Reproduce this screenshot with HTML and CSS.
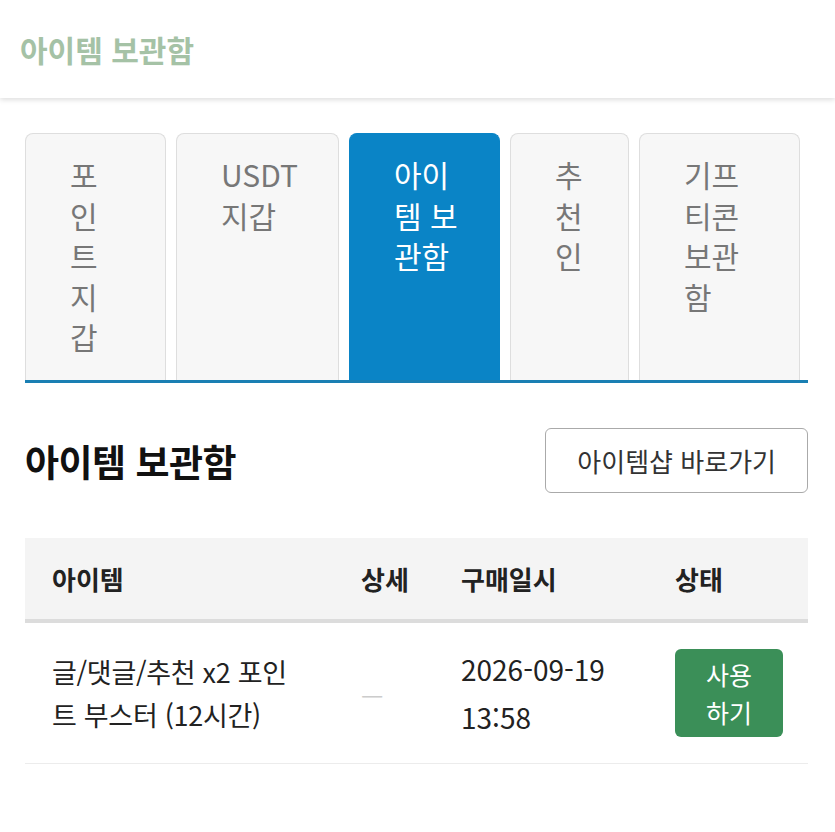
FILE: index.html
```html
<!DOCTYPE html>
<html lang="ko">
<head>
    <meta charset="UTF-8">
    <meta name="viewport" content="width=device-width, initial-scale=1.0">
    <title>아이템 보관함</title>
    <link rel="stylesheet" href="styles.css">
</head>
<body>
    <!-- 상단 헤더 -->
    <header class="top-bar">
        <h1 class="top-title">아이템 보관함</h1>
    </header>

    <main class="page">
        <!-- 마이페이지 탭 -->
        <ul class="tabs">
            <li class="tab tab-point">포인트 지갑</li>
            <li class="tab tab-usdt">USDT 지갑</li>
            <li class="tab tab-item active">아이템 보관함</li>
            <li class="tab tab-ref">추천인</li>
            <li class="tab tab-gift">기프티콘 보관함</li>
        </ul>

        <div class="section-head">
            <h2>아이템 보관함</h2>
            <a class="shop-btn" href="#">아이템샵 바로가기</a>
        </div>

        <table class="item-table">
            <colgroup>
                <col class="col-name">
                <col class="col-detail">
                <col class="col-date">
                <col class="col-state">
            </colgroup>
            <thead>
                <tr>
                    <th>아이템</th>
                    <th>상세</th>
                    <th>구매일시</th>
                    <th>상태</th>
                </tr>
            </thead>
            <tbody>
                <tr>
                    <td class="name">글/댓글/추천 x2 포인트 부스터 (12시간)</td>
                    <td class="detail">—</td>
                    <td class="date">2026-09-19 13:58</td>
                    <td class="state"><button class="use-btn">사용하기</button></td>
                </tr>
            </tbody>
        </table>
    </main>
</body>
</html>
```

FILE: styles.css
```css
body {
    margin: 0;
    font-family: "Noto Sans CJK KR", "Noto Sans", sans-serif;
    background: #fff;
    color: #222;
}
.top-bar {
    height: 98px;
    background: #fff;
    box-shadow: 0 2px 5px rgba(0, 0, 0, 0.13);
    display: flex;
    align-items: center;
    padding: 0 20px;
}
.top-title {
    margin: 0;
    font-size: 30px;
    font-weight: 700;
    color: #a5c2a6; /* 연한 녹색 */
}
.page {
    padding: 35px 27px 40px 25px;
}
/* 탭 */
.tabs {
    list-style: none;
    margin: 0;
    padding: 0;
    display: flex;
    gap: 10px;
    border-bottom: 3px solid #1a7fb3;
}
.tab {
    box-sizing: border-box;
    height: 247px;
    padding: 20px 43px 0 44px;
    background: #f7f7f7;
    border: 1px solid #dedede;
    border-bottom: none;
    border-radius: 8px 8px 0 0;
    font-size: 30px;
    line-height: 40.5px;
    color: #777;
    flex: none;
}
.tab-point { width: 141px; }
.tab-usdt { width: 163px; }
.tab-item { width: 151px; padding-right: 34px; }
.tab-ref { width: 119px; }
.tab-gift { width: 161px; }
.tab.active {
    background: #0a84c6;
    border-color: #0a84c6;
    color: #fff;
}
/* 섹션 제목 */
.section-head {
    display: flex;
    justify-content: space-between;
    align-items: center;
    margin: 45px 0 45px;
}
.section-head h2 {
    margin: 0;
    font-size: 37px;
    font-weight: 700;
    color: #111;
    letter-spacing: -0.5px;
}
.shop-btn {
    box-sizing: border-box;
    height: 65px;
    display: flex;
    align-items: center;
    padding: 0 31px;
    border: 1px solid #aaa;
    border-radius: 6px;
    font-size: 26px;
    color: #333;
    text-decoration: none;
}
/* 테이블 */
.item-table {
    width: 100%;
    border-collapse: collapse;
    table-layout: fixed;
}
.col-name { width: 309px; }
.col-detail { width: 100px; }
.col-date { width: 214px; }
.col-state { width: 160px; }
.item-table th {
    height: 81px;
    padding: 0 0 0 27px;
    background: #f4f4f4;
    border-bottom: 4px solid #dcdcdc;
    text-align: left;
    font-size: 26px;
    font-weight: 700;
    color: #222;
}
.item-table td {
    height: 142px;
    box-sizing: border-box;
    padding: 0 20px 0 27px;
    border-bottom: 1px solid #ececec;
    font-size: 25px;
    color: #222;
    vertical-align: middle;
}
.item-table td.name {
    padding-right: 30px;
    font-size: 27px;
    line-height: 43px;
    letter-spacing: -0.3px;
}
.item-table td.detail {
    color: #ccc;
}
.item-table td.date {
    font-size: 28px;
    line-height: 48px;
}
.item-table td.state {
    padding-right: 25px;
}
.use-btn {
    width: 100%;
    padding: 6px 20px;
    border: none;
    border-radius: 6px;
    background: #3b8f58;
    color: #fff;
    font-family: inherit;
    font-size: 25px;
    line-height: 38px;
    cursor: pointer;
}
```
